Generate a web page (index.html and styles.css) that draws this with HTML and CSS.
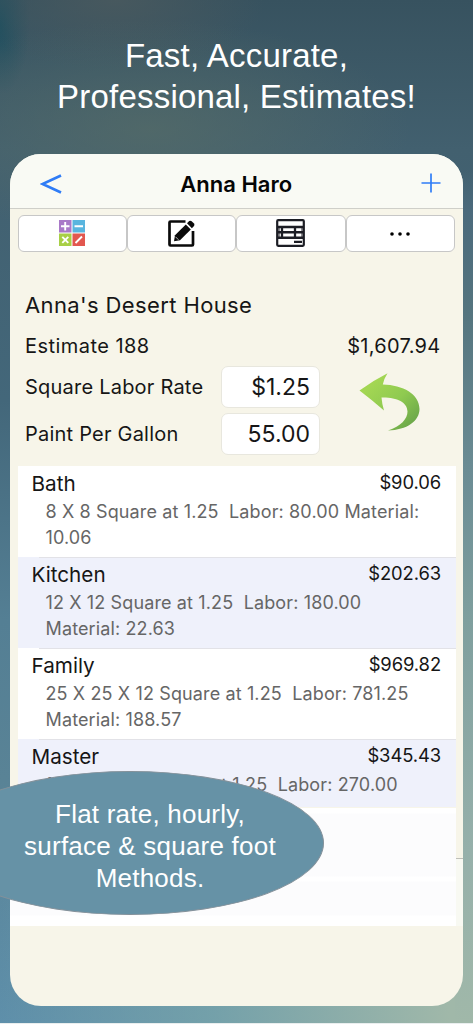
FILE: index.html
```html
<!DOCTYPE html>
<html lang="en">
<head>
<meta charset="utf-8">
<title>Anna Haro</title>
<link rel="stylesheet" href="styles.css">
</head>
<body>
<main class="promo">
  <h1 class="headline">Fast, Accurate,<br>Professional, Estimates!</h1>
  <section class="phone">
    <header class="nav">
      <svg class="back" viewBox="0 0 22 20"><path d="M21 1.500 L2.500 10 L21 18.500" fill="none" stroke="#2f7cf6" stroke-width="2.700"/></svg>
      <h2 class="nav-title">Anna Haro</h2>
      <svg class="add" viewBox="0 0 20 20"><path d="M10 .5V19.500M.5 10H19.500" stroke="#2f7cf6" stroke-width="1.700"/></svg>
    </header>
    <div class="tools">
      <div class="tool"><svg width="26" height="26" viewBox="0 0 26 26">
        <rect width="12.500" height="12.500" fill="#a979c8"/><rect x="13.500" width="12.500" height="12.500" fill="#59b5df"/>
        <rect y="13.500" width="12.500" height="12.500" fill="#a8cf46"/><rect x="13.500" y="13.500" width="12.500" height="12.500" fill="#e2574f"/>
        <path d="M6.200 2v8.500M2 6.200h8.500M15.500 6.200h8.500M3.300 16.800l6 6M9.300 16.800l-6 6M16.500 23l6.500-6.500" stroke="#fff" stroke-width="1.900" fill="none"/>
      </svg></div>
      <div class="tool"><svg width="27" height="27" viewBox="0 0 27 27">
        <path d="M17.500 1.500H2.500Q1.500 1.500 1.500 2.500V24.500Q1.500 25.500 2.500 25.500H24Q25 25.500 25 24.500V11" fill="none" stroke="#0a0a0a" stroke-width="2.700"/>
        <path d="M7 15.200L17.800 4.400L22.800 9.400L12 20.200L6 21.200Z" fill="#0a0a0a"/>
        <path d="M19 3.200L21.200 1Q22.500 .2 23.700 1.200L26 3.500Q26.900 4.800 26 6L23.900 8.200Z" fill="#0a0a0a"/>
        <path d="M7.500 16.800L10.500 19.800" stroke="#fff" stroke-width=".7"/>
      </svg></div>
      <div class="tool"><svg width="29" height="28" viewBox="0 0 29 28">
        <g fill="none" stroke="#1c1d24"><rect x="1.200" y="1.200" width="26.600" height="25.600" rx="1" stroke-width="2.200"/><path d="M1 8H28M2 13.300H27M1 18.700H28" stroke-width="2.500"/><path d="M6 8V19M19 8V19" stroke-width="2.300"/><path d="M3 8V19M26 8V19" stroke-width="1"/><path d="M18 22.800H26" stroke-width="2.300"/></g>
      </svg></div>
      <div class="tool"><svg class="dots" width="20" height="4" viewBox="0 0 20 4"><circle cx="2" cy="2" r="1.800"/><circle cx="10" cy="2" r="1.800"/><circle cx="18" cy="2" r="1.800"/></svg></div>
    </div>
    <div class="summary">
      <div class="labels">
        <div class="project">Anna's Desert House</div>
        <div class="line estimate">Estimate 188</div>
        <div class="line rate"><span>Square Labor Rate</span><div class="field">$1.25</div></div>
        <div class="line paint"><span>Paint Per Gallon</span><div class="field">55.00</div></div>
      </div>
      <div class="side">
        <div class="total">$1,607.94</div>
        <svg class="undo" viewBox="0 0 62 60">
          <defs><linearGradient id="leaf" x1="0" y1="0" x2="1" y2="1"><stop offset=".2" stop-color="#a3d653"/><stop offset=".55" stop-color="#8fca50"/><stop offset="1" stop-color="#609c48"/></linearGradient></defs>
          <path d="M.5 18.500Q14 8.500 28.500 1.200Q25 6.500 23.800 12.500C44 13 60.500 22 60.500 37C60.500 49 48 58 29 58.500C42 54 48.500 47 48.500 39.500C48.500 30 37 25 22.500 25.500Q23 32 25 38.500Q13 28 .5 18.500Z" fill="url(#leaf)"/>
        </svg>
      </div>
    </div>
    <div class="list">
      <article class="room">
        <div class="room-head"><span class="name">Bath</span><span class="amount">$90.06</span></div>
        <p class="detail">8 X 8 Square at 1.25&nbsp; Labor: 80.00 Material:<br>10.06</p>
      </article>
      <article class="room alt">
        <div class="room-head"><span class="name">Kitchen</span><span class="amount">$202.63</span></div>
        <p class="detail">12 X 12 Square at 1.25&nbsp; Labor: 180.00<br>Material: 22.63</p>
      </article>
      <article class="room">
        <div class="room-head"><span class="name">Family</span><span class="amount">$969.82</span></div>
        <p class="detail">25 X 25 X 12 Square at 1.25&nbsp; Labor: 781.25<br>Material: 188.57</p>
      </article>
      <article class="room alt last">
        <div class="room-head"><span class="name">Master</span><span class="amount">$345.43</span></div>
        <p class="detail">15 X 12 X 8 Square at 1.25&nbsp; Labor: 270.00</p>
      </article>
    </div>
    <div class="blank"><div class="paper"></div><div class="edge"></div></div>
  </section>
  <aside class="bubble"><p>Flat rate, hourly,<br>surface &amp; square foot<br>Methods.</p></aside>
</main>
</body>
</html>
```
FILE: styles.css
```css
* { box-sizing: border-box; }
body { margin: 0; background: #e9eeee; }
h1, h2, p { margin: 0; font-weight: 400; }
.promo {
  position: relative; width: 473px; height: 1023px; padding: 34.500px 10px 0; overflow: hidden;
  background:
    radial-gradient(ellipse 260px 110px at 150px 130px, rgba(86,108,103,.7), transparent),
    radial-gradient(ellipse 150px 70px at 115px 0, rgba(73,89,94,.9), transparent),
    radial-gradient(ellipse 30px 70px at 0 25px, rgba(25,78,94,.8), transparent),
    linear-gradient(90deg, transparent, rgba(125,168,170,.7) 45%, #a0b8a9 95%) 0 900px / 100% 123px no-repeat,
    linear-gradient(180deg, #37525f 0, #42606f 150px, #43677a 400px, #547f94 620px, #598396 780px, #5e8faa 1023px);
}
.promo::before {
  content: ""; position: absolute; left: 455px; top: 170px; width: 18px; height: 853px;
  background: linear-gradient(transparent, #4b6a7c 40px, #55757f 145px, #6b8c94 300px, #7f9f9e 450px, #96b0aa 680px, #a0b8a9);
}
.headline { height: 119px; font: 400 33px/41px "Liberation Sans", Arial, sans-serif; letter-spacing: .2px; color: #fff; text-align: center; }
.phone { position: relative; width: 452.500px; height: 852px; border-radius: 31px; overflow: hidden; background: #f7f5e9; font-family: Inter, "Liberation Sans", sans-serif; color: #161616; }
.nav { height: 55px; padding: 5px 22px 0 30px; display: grid; grid-template-columns: 40px 1fr 40px; align-items: center; background: #f9faf4; border-bottom: 1px solid #cfcfc9; }
.back { width: 22px; height: 20px; margin-top: 1px; }
.add { width: 20px; height: 20px; justify-self: end; }
.nav-title { font-size: 22px; font-weight: 600; line-height: 28px; color: #050505; margin: 2px 8px 0 0; text-align: center; }
.tools { height: 37px; margin: 6px 7.500px 0; display: flex; }
.tool { flex: 1; display: flex; align-items: center; justify-content: center; background: #fff; border: 1.500px solid #c7c7c7; border-radius: 6px; }
.dots { margin-top: 1px; }
.summary { height: 214.500px; display: flex; padding: 38px 22px 0 15px; justify-content: space-between; }
.labels { width: 295px; }
.project { height: 39px; line-height: 31px; font-size: 22px; letter-spacing: .38px; white-space: nowrap; }
.line { font-size: 20px; letter-spacing: .22px; height: 37.500px; line-height: 34px; white-space: nowrap; }
.estimate { letter-spacing: .45px; }
.rate, .paint { display: flex; align-items: center; justify-content: space-between; height: 42px; line-height: 42px; }
.paint { margin-top: 4.500px; }
.field { width: 99px; height: 42px; border: 1px solid #e8e7de; border-radius: 7px; background: #fff; text-align: right; padding-right: 9px; font-size: 23px; line-height: 40px; letter-spacing: 0; }
.side { display: flex; flex-direction: column; align-items: flex-end; padding-top: 39px; }
.total { font-size: 20px; line-height: 34px; height: 34px; letter-spacing: .3px; }
.undo { width: 62px; height: 60px; margin: 9px 19.500px 0 0; }
.list { margin: 0 7px 0 7.500px; height: 341px; }
.room { position: relative; height: 91px; padding: 4px 14.500px 0 14px; background: #fff; }
.room + .room::before { content: ""; position: absolute; left: 21px; right: 0; top: 0; height: 1px; background: #e2e2e7; }
.room.alt { background: #eff1fb; }
.room.last { height: 68px; overflow: hidden; }
.room-head { display: flex; justify-content: space-between; height: 29px; }
.name { font-size: 20.700px; line-height: 28px; }
.amount { font-size: 18.400px; letter-spacing: -.1px; line-height: 25px; }
.detail { padding-left: 14px; font-size: 18px; letter-spacing: .13px; line-height: 25.500px; color: #666; white-space: nowrap; }
.blank { height: 119px; display: flex; border-top: 1px solid #f7f5e9; }
.paper { width: 445.500px; background: linear-gradient(#fff 0 5px, #fcfcfd 6px 68px, #fff 69px 73px, #fcfcfd 74px 107px, #fff 108px); }
.edge { flex: 1; margin-top: 50px; border-top: 1px solid #bfbfb9; background: #f8f9f2; }
.bubble { position: absolute; left: -64px; top: 770.500px; width: 388px; height: 144px; border: 1px solid #84919a; border-radius: 50%; background: #6692a6; color: #fff; font: 26px/32px "Liberation Sans", Arial, sans-serif; letter-spacing: .22px; text-align: center; padding: 26.500px 0 0 40px; }
```
